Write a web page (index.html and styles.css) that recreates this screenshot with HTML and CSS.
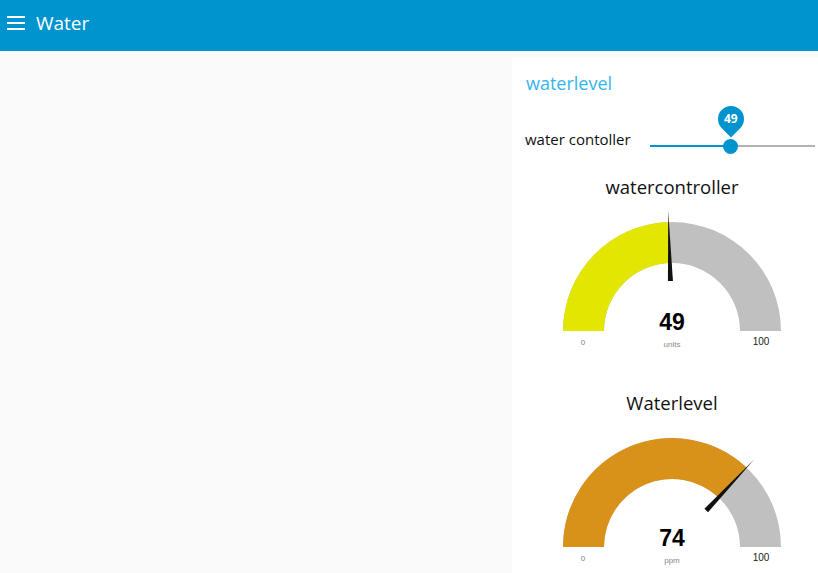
FILE: index.html
```html
<!DOCTYPE html>
<html>
<head>
<meta charset="utf-8">
<title>Water</title>
<link rel="stylesheet" href="styles.css">
</head>
<body>
<header class="toolbar">
  <svg class="menu-icon" width="18" height="14" viewBox="0 0 18 14">
    <rect x="0" y="0" width="18" height="2" fill="#fff"/>
    <rect x="0" y="6" width="18" height="2" fill="#fff"/>
    <rect x="0" y="12" width="18" height="2" fill="#fff"/>
  </svg>
  <span class="toolbar-title">Water</span>
</header>
<main class="content">
  <div class="spacer"></div>
  <section class="card">
    <div class="group-title">waterlevel</div>
    <div class="slider-row">
      <span class="slider-label">water contoller</span>
      <div class="slider">
        <div class="track-fill" style="width:49%"></div>
        <div class="thumb" style="left:49%"></div>
        <div class="pin" style="left:49%"><div class="pin-shape"></div><span class="pin-text">49</span></div>
      </div>
    </div>
    <div class="gauge">
      <div class="gauge-title">watercontroller</div>
      <svg class="gauge-svg" width="320" height="182" viewBox="0 0 320 182">
        <path d="M51 127 A109 109 0 0 1 269 127 L228 127 A68 68 0 0 0 92 127 Z" fill="#c0c0c0"/>
        <path d="M51 127 A109 109 0 0 1 156.58 18.05 L157.86 59.03 A68 68 0 0 0 92 127 Z" fill="#e2e600"/>
        <polygon points="160.93,76.94 155.93,77.10 156.23,7.06" fill="#111"/>
        <text x="160" y="126" class="g-value">49</text>
        <text x="160" y="143" class="g-unit">units</text>
        <text x="71" y="141" class="g-min">0</text>
        <text x="249" y="141" class="g-max">100</text>
      </svg>
    </div>
    <div class="gauge">
      <div class="gauge-title">Waterlevel</div>
      <svg class="gauge-svg" width="320" height="182" viewBox="0 0 320 182">
        <path d="M51 127 A109 109 0 0 1 269 127 L228 127 A68 68 0 0 0 92 127 Z" fill="#c0c0c0"/>
        <path d="M51 127 A109 109 0 0 1 234.61 47.54 L206.55 77.43 A68 68 0 0 0 92 127 Z" fill="#d8921a"/>
        <polygon points="196.05,92.26 192.41,88.84 242.14,39.52" fill="#111"/>
        <text x="160" y="126" class="g-value">74</text>
        <text x="160" y="143" class="g-unit">ppm</text>
        <text x="71" y="141" class="g-min">0</text>
        <text x="249" y="141" class="g-max">100</text>
      </svg>
    </div>
  </section>
</main>
</body>
</html>
```
FILE: styles.css
```css
html, body {
  margin: 0;
  padding: 0;
  overflow: hidden;
}
body {
  background: #fafafa;
  font-family: "Open Sans", "Noto Sans", sans-serif;
  color: #1f1f1f;
  width: 818px;
  height: 573px;
}
.toolbar {
  height: 51px;
  background: #0094ce;
  display: flex;
  align-items: center;
  padding-left: 7px;
  box-sizing: border-box;
  padding-bottom: 6px;
}
.menu-icon {
  display: block;
}
.toolbar-title {
  color: #fff;
  font-size: 19px;
  margin-left: 11px;
  line-height: 22px;
}
.content {
  display: grid;
  grid-template-columns: 512px 320px;
  padding-top: 7px;
  height: 515px;
}
.card {
  background: #fff;
  overflow: hidden;
}
.group-title {
  height: 50px;
  line-height: 50px;
  padding-left: 14px;
  font-size: 18px;
  font-weight: 500;
  color: #33b5f0;
}
.slider-row {
  height: 62px;
  display: flex;
  align-items: center;
  padding-left: 13px;
}
.slider-label {
  font-size: 15px;
  width: 125px;
  line-height: 20px;
  color: #111;
}
.slider {
  position: relative;
  width: 165px;
  height: 2px;
  background: #b3b3b3;
  margin-top: 14px;
}
.track-fill {
  height: 2px;
  background: #0094ce;
}
.thumb {
  position: absolute;
  top: -6.5px;
  width: 15px;
  height: 15px;
  margin-left: -7.5px;
  border-radius: 50%;
  background: #0094ce;
}
.pin {
  position: absolute;
  top: -40px;
  width: 28px;
  height: 28px;
  margin-left: -14px;
}
.pin-shape {
  position: absolute;
  left: 1px;
  top: 1px;
  width: 26px;
  height: 26px;
  background: #0094ce;
  border-radius: 50% 50% 50% 0;
  transform: rotate(-45deg);
}
.pin-text {
  position: absolute;
  left: 0;
  right: 0;
  top: 0;
  line-height: 28px;
  text-align: center;
  color: #fff;
  font-weight: bold;
  font-size: 12px;
}
.gauge {
  height: 216px;
}
.gauge-title {
  height: 34px;
  line-height: 34px;
  text-align: center;
  font-size: 18.5px;
  font-weight: 500;
  color: #111;
}
.gauge-svg {
  display: block;
}
.g-value {
  font-family: "Liberation Sans", Arial, sans-serif;
  font-weight: bold;
  font-size: 23px;
  text-anchor: middle;
  fill: #010101;
}
.g-unit {
  font-family: "Liberation Sans", Arial, sans-serif;
  font-size: 8px;
  text-anchor: middle;
  fill: #888;
}
.g-min {
  font-family: "Liberation Sans", Arial, sans-serif;
  font-size: 8px;
  text-anchor: middle;
  fill: #7a80a0;
}
.g-max {
  font-family: "Liberation Sans", Arial, sans-serif;
  font-size: 10px;
  text-anchor: middle;
  fill: #222;
}
```
